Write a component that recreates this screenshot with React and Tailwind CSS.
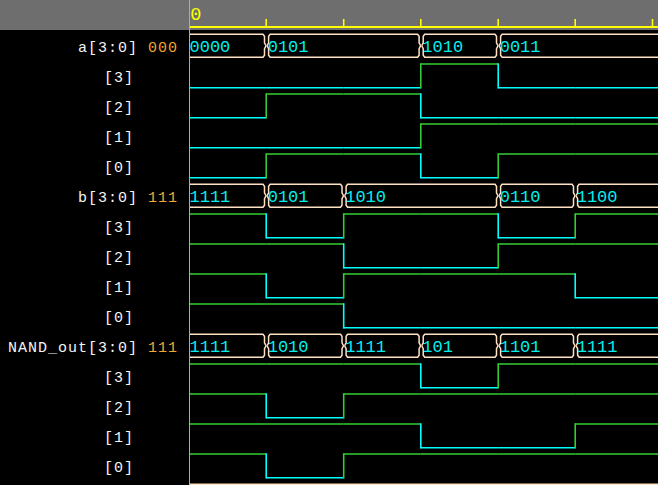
import React from "react";

// time marks (page x) for t = 0..6, plus an off-screen end
const XS = [189, 266.2, 343.7, 420.8, 498.2, 575.2, 652.5, 720];
const ROW = 30;
const TOP = 30;

const HIGH = "#33cc33";
const LOW = "#00ffff";
const BUS = "#ffe2c4";
const VAL = "#00f0f0";

// value of each bus per interval t0..t5
const groups = [
    { name: "a[3:0]", cur: "000", vals: ["0000", "0101", "0101", "1010", "0011", "0011"] },
    { name: "b[3:0]", cur: "111", vals: ["1111", "0101", "1010", "1010", "0110", "1100"] },
    { name: "NAND_out[3:0]", cur: "111", vals: ["1111", "1010", "1111", "0101", "1101", "1111"], show: { 3: "101" } },
];

function busPath(s, e, top, bot, first, last) {
    const m = (top + bot) / 2;
    let d = "";
    if (first) {
        d += `M ${s} ${bot} L ${s} ${top} `;
    } else {
        d += `M ${s} ${m} L ${s + 1.5} ${m - 3} L ${s + 1.5} ${top + 2} L ${s + 3} ${top} `;
    }
    if (last) {
        d += `L ${e} ${top} M ${e} ${bot} `;
    } else {
        d += `L ${e - 3.2} ${top} L ${e - 1.7} ${top + 2} L ${e - 1.7} ${m - 3} L ${e - 0.2} ${m} L ${e - 1.7} ${m + 3} L ${e - 1.7} ${bot - 2} L ${e - 3.2} ${bot} `;
    }
    if (first) {
        d += `L ${s} ${bot}`;
    } else {
        d += `L ${s + 3} ${bot} L ${s + 1.5} ${bot - 2} L ${s + 1.5} ${m + 3} L ${s} ${m}`;
    }
    return d;
}

function Bus({ row, vals, show = {} }) {
    const y0 = TOP + row * ROW;
    const top = y0 + 4.2;
    const bot = y0 + 27.3;
    // merge equal neighbours
    const segs = [];
    vals.forEach((v, k) => {
        const prev = segs[segs.length - 1];
        if (prev && prev.v === v && v !== null) prev.end = k + 1;
        else segs.push({ v, start: k, end: k + 1, label: show[k] ?? v });
    });
    return (
        <g>
            {segs.map((sg, i) => {
                const s = i === 0 ? XS[0] : XS[sg.start] + 0.9;
                const e = sg.end >= 6 ? XS[7] : XS[sg.end];
                return (
                    <g key={i}>
                        <path d={busPath(s, e, top, bot, i === 0, sg.end >= 6)} fill="none" stroke={BUS} strokeWidth="1.5" />
                        {sg.label && (
                            <text x={s + (i === 0 ? 0.5 : 0.6)} y={y0 + 22} fill={VAL} fontSize="17" fontFamily="'Liberation Mono', monospace">
                                {sg.label}
                            </text>
                        )}
                    </g>
                );
            })}
        </g>
    );
}

function Bit({ row, levels }) {
    const y0 = TOP + row * ROW;
    const yh = y0 + 4;
    const yl = y0 + 27.8;
    const parts = [];
    levels.forEach((lv, k) => {
        const s = XS[k];
        const e = k === levels.length - 1 ? XS[7] : XS[k + 1];
        const y = lv ? yh : yl;
        const c = lv ? HIGH : LOW;
        parts.push(<line key={"h" + k} x1={s} y1={y} x2={e} y2={y} stroke={c} strokeWidth="1.6" />);
        if (k > 0 && levels[k - 1] !== lv) {
            parts.push(<line key={"v" + k} x1={s} y1={yh - 0.8} x2={s} y2={yl + 0.8} stroke={c} strokeWidth="1.6" />);
        }
    });
    return <g>{parts}</g>;
}

const rows = [];
groups.forEach((g) => {
    rows.push({ kind: "bus", g });
    [3, 2, 1, 0].forEach((b) => rows.push({ kind: "bit", g, b }));
});

function Label({ r }) {
    if (r.kind === "bus") {
        return (
            <div className="h-[30px] flex items-center justify-end pr-[11px] pt-[6px] whitespace-pre">
                <span className="text-[#f4f4f4]">{r.g.name} </span>
                <span className="text-[#f2a634]">{r.g.cur}</span>
            </div>
        );
    }
    return (
        <div className="h-[30px] flex items-center justify-end pr-[55px] pt-[6px] text-[#f4f4f4]">[{r.b}]</div>
    );
}

export default function App() {
    const ticks = [1, 2, 3, 4, 5, 6];
    return (
        <div className="w-[658px] h-[485px] bg-black overflow-hidden flex flex-col">
            {/* time ruler */}
            <div className="h-[30px] flex bg-[#6e6e6e] shrink-0">
                <div className="w-[189px]" />
                <div className="w-px bg-[#e8a040]" />
                <svg width="468" height="30" viewBox="190 0 468 30" className="block">
                    <text x="190.3" y="19.5" fill="#ffff00" fontSize="18.5" fontFamily="'Liberation Mono', monospace">0</text>
                    <rect x="189" y="26" width="470" height="2" fill="#ffff00" />
                    {ticks.map((t) => (
                        <line key={t} x1={XS[t]} y1="19" x2={XS[t]} y2="27" stroke="#ffff00" strokeWidth="1.6" />
                    ))}
                </svg>
            </div>

            <div className="flex flex-1 min-h-0">
                {/* signal names */}
                <div className="w-[189px] shrink-0 font-['Liberation_Mono',monospace] text-[15px] tracking-[1px] leading-none">
                    {rows.map((r, i) => (
                        <Label key={i} r={r} />
                    ))}
                </div>
                <div className="w-px bg-[#e8a040] shrink-0" />

                {/* waves */}
                <svg width="468" height="455" viewBox="190 30 468 455" className="block">
                    {rows.map((r, i) =>
                        r.kind === "bus" ? (
                            <Bus key={i} row={i} vals={r.g.vals} show={r.g.show} />
                        ) : (
                            <Bit key={i} row={i} levels={r.g.vals.map((v) => v[3 - r.b] === "1")} />
                        )
                    )}
                    <Bus row={15} vals={["", "", "", "", "", ""]} />
                </svg>
            </div>
        </div>
    );
}
